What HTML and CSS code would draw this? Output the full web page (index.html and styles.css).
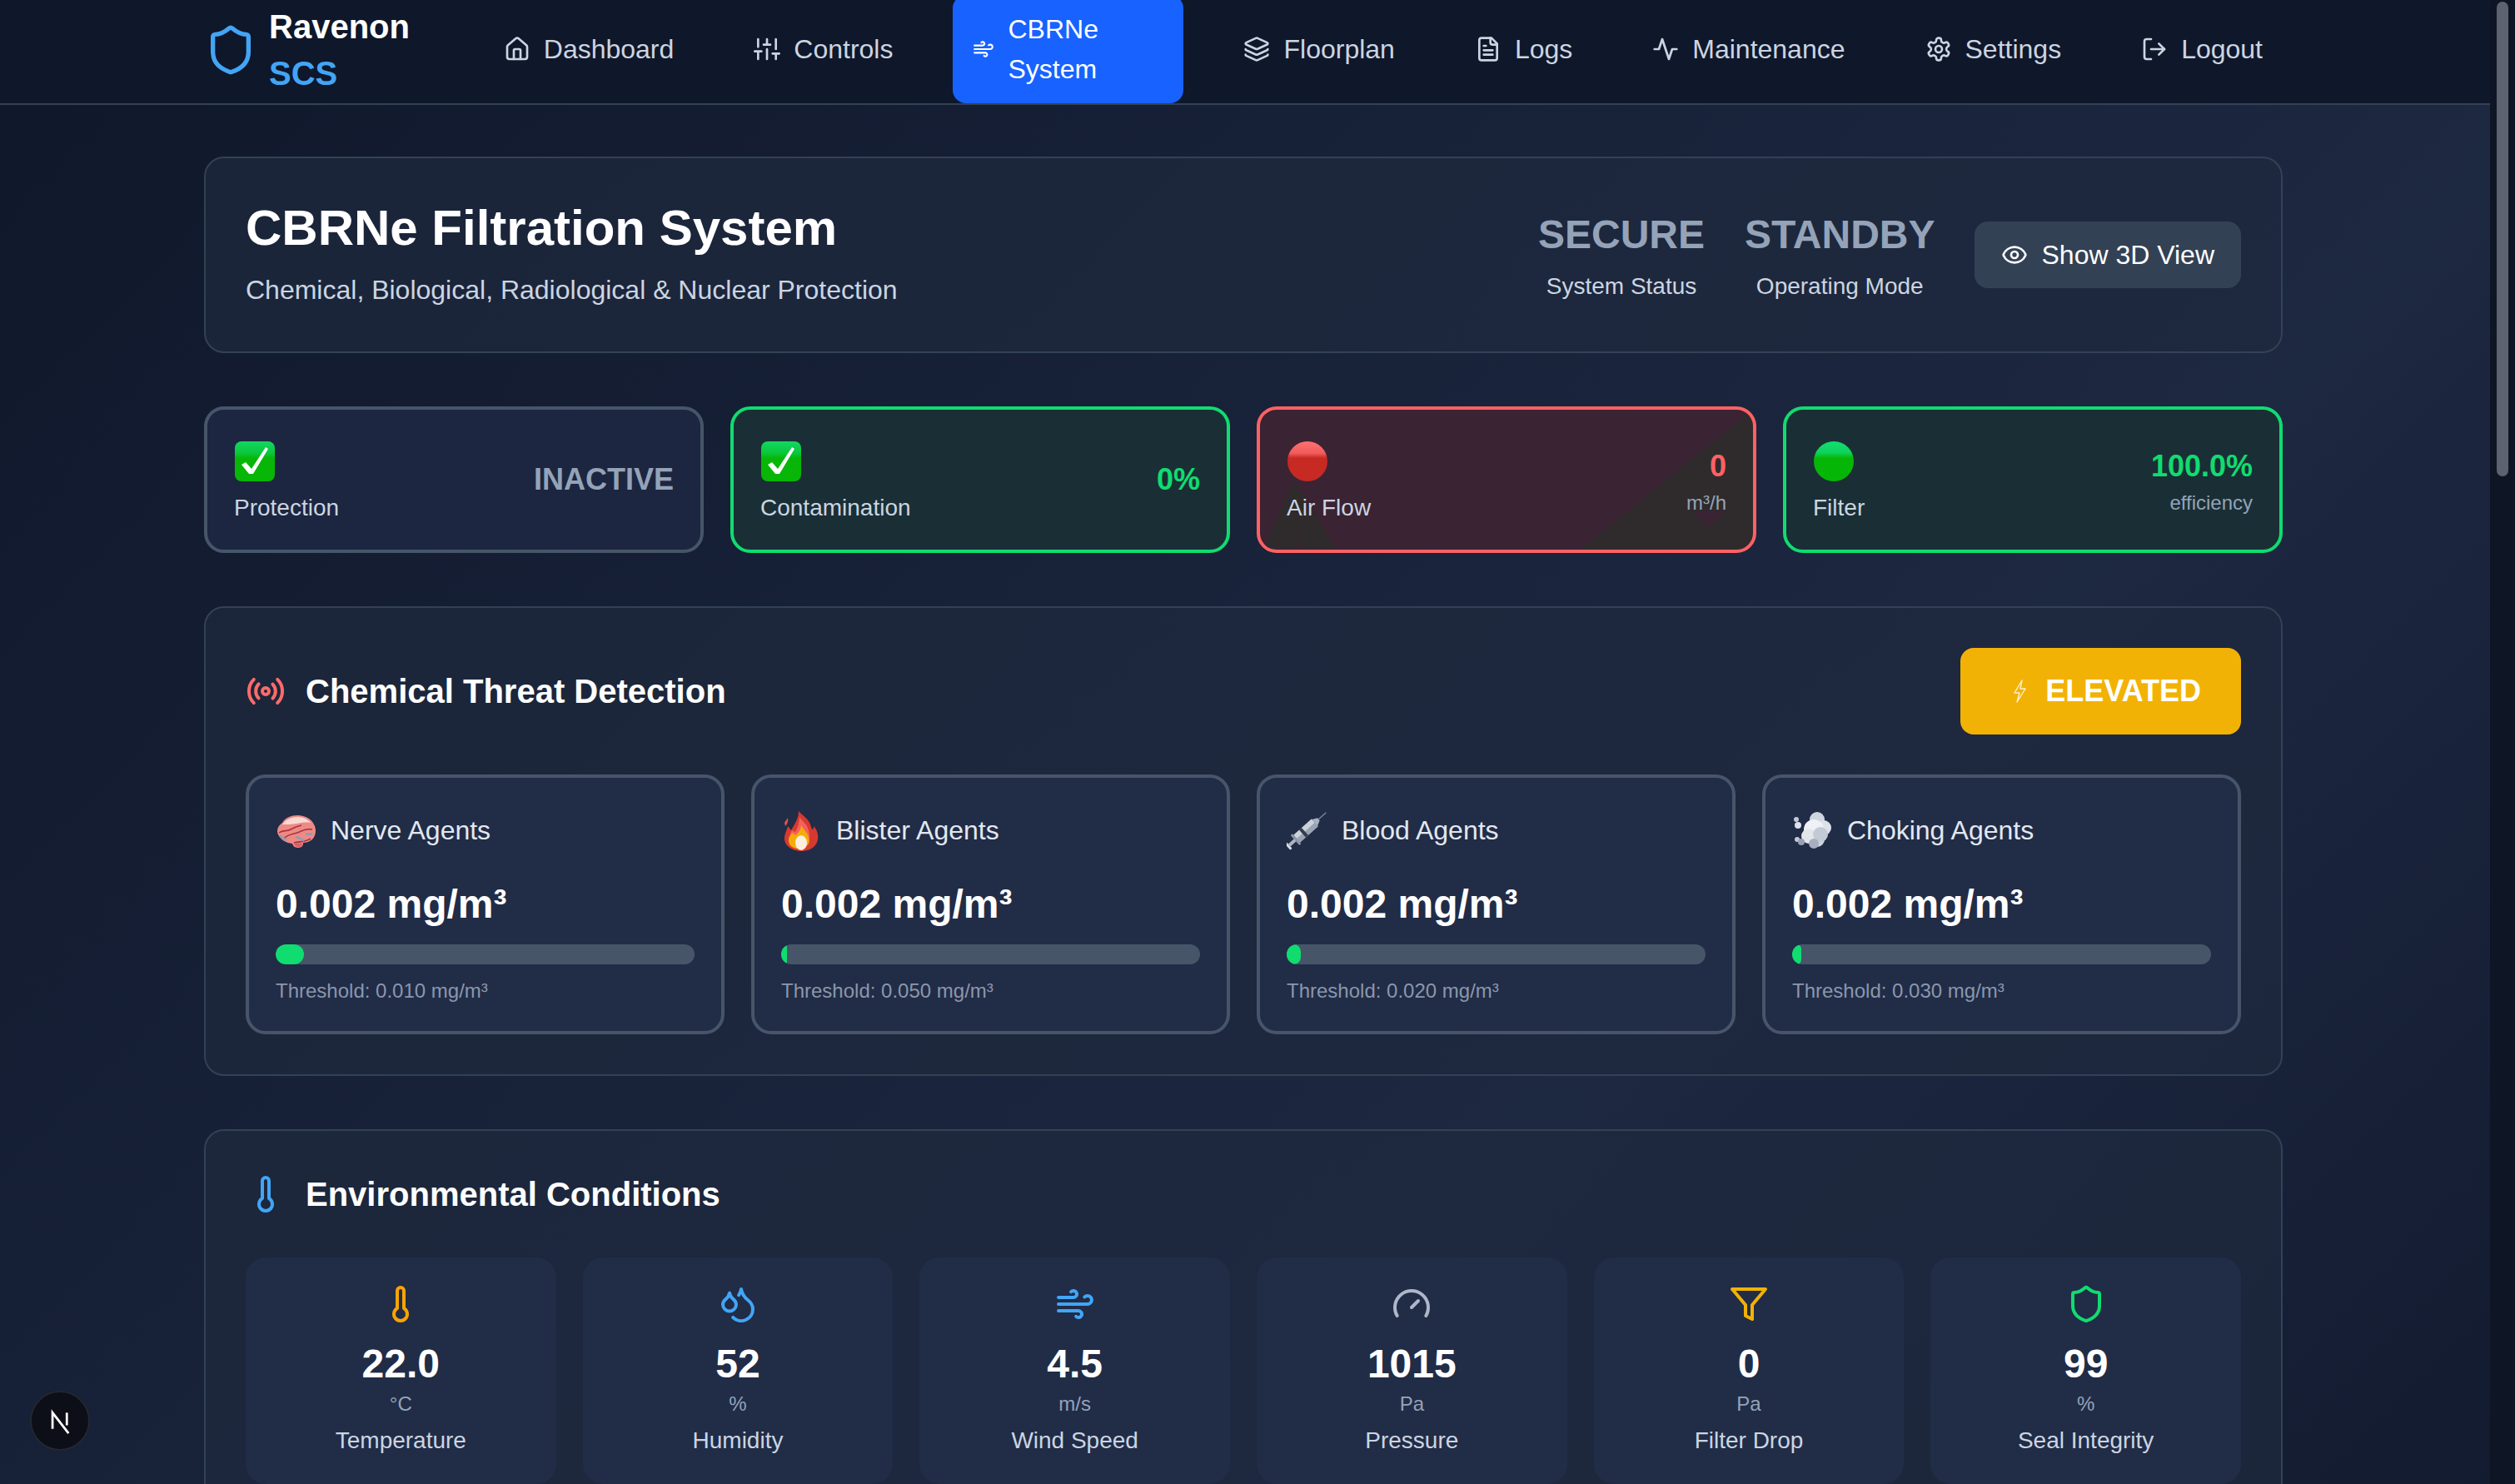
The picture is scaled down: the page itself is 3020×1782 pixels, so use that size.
FILE: index.html
```html
<!DOCTYPE html>
<html lang="en">
<head>
    <meta charset="UTF-8">
    <meta name="viewport" content="width=device-width, initial-scale=1.0">
    <title>Ravenon SCS - CBRNe System</title>
    <link rel="stylesheet" href="styles.css">
</head>
<body>
<div class="app">
    <div class="page">
        <header class="topbar">
            <div class="topbar-inner">
                <div class="brand">
                    <svg class="brand-icon" viewBox="0 0 24 24"><path d="M20 13c0 5-3.5 7.5-7.66 8.95a1 1 0 0 1-.67-.01C7.5 20.5 4 18 4 13V6a1 1 0 0 1 1-1c2 0 4.5-1.2 6.24-2.72a1.17 1.17 0 0 1 1.52 0C14.51 3.81 17 5 19 5a1 1 0 0 1 1 1z"/></svg>
                    <div class="brand-text">Ravenon <span>SCS</span></div>
                </div>
                <nav class="nav">
                    <a class="nav-item"><svg class="icon" viewBox="0 0 24 24"><path d="M15 21v-8a1 1 0 0 0-1-1h-4a1 1 0 0 0-1 1v8"/><path d="M3 10a2 2 0 0 1 .709-1.528l7-5.999a2 2 0 0 1 2.582 0l7 5.999A2 2 0 0 1 21 10v9a2 2 0 0 1-2 2H5a2 2 0 0 1-2-2z"/></svg>Dashboard</a>
                    <a class="nav-item"><svg class="icon" viewBox="0 0 24 24"><path d="M4 21v-7M4 10V3M12 21v-9M12 8V3M20 21v-5M20 12V3M1 14h6M9 8h6M17 16h6"/></svg>Controls</a>
                    <a class="nav-item active"><svg class="icon" viewBox="0 0 24 24"><path d="M17.7 7.7a2.5 2.5 0 1 1 1.8 4.3H2"/><path d="M9.6 4.6A2 2 0 1 1 11 8H2"/><path d="M12.6 19.4A2 2 0 1 0 14 16H2"/></svg><span>CBRNe System</span></a>
                    <a class="nav-item"><svg class="icon" viewBox="0 0 24 24"><path d="M12.83 2.18a2 2 0 0 0-1.66 0L2.6 6.08a1 1 0 0 0 0 1.83l8.58 3.91a2 2 0 0 0 1.66 0l8.58-3.9a1 1 0 0 0 0-1.83Z"/><path d="M2 12a1 1 0 0 0 .58.91l8.6 3.91a2 2 0 0 0 1.65 0l8.58-3.9A1 1 0 0 0 22 12"/><path d="M2 17a1 1 0 0 0 .58.91l8.6 3.91a2 2 0 0 0 1.65 0l8.58-3.9A1 1 0 0 0 22 17"/></svg>Floorplan</a>
                    <a class="nav-item"><svg class="icon" viewBox="0 0 24 24"><path d="M15 2H6a2 2 0 0 0-2 2v16a2 2 0 0 0 2 2h12a2 2 0 0 0 2-2V7Z"/><path d="M14 2v4a2 2 0 0 0 2 2h4"/><path d="M10 9H8M16 13H8M16 17H8"/></svg>Logs</a>
                    <a class="nav-item"><svg class="icon" viewBox="0 0 24 24"><path d="M22 12h-4l-3 9L9 3l-3 9H2"/></svg>Maintenance</a>
                    <a class="nav-item"><svg class="icon" viewBox="0 0 24 24"><path d="M12.22 2h-.44a2 2 0 0 0-2 2v.18a2 2 0 0 1-1 1.73l-.43.25a2 2 0 0 1-2 0l-.15-.08a2 2 0 0 0-2.73.73l-.22.38a2 2 0 0 0 .73 2.73l.15.1a2 2 0 0 1 1 1.72v.51a2 2 0 0 1-1 1.74l-.15.09a2 2 0 0 0-.73 2.73l.22.38a2 2 0 0 0 2.73.73l.15-.08a2 2 0 0 1 2 0l.43.25a2 2 0 0 1 1 1.73V20a2 2 0 0 0 2 2h.44a2 2 0 0 0 2-2v-.18a2 2 0 0 1 1-1.73l.43-.25a2 2 0 0 1 2 0l.15.08a2 2 0 0 0 2.73-.73l.22-.39a2 2 0 0 0-.73-2.73l-.15-.08a2 2 0 0 1-1-1.74v-.5a2 2 0 0 1 1-1.74l.15-.09a2 2 0 0 0 .73-2.73l-.22-.38a2 2 0 0 0-2.73-.73l-.15.08a2 2 0 0 1-2 0l-.43-.25a2 2 0 0 1-1-1.73V4a2 2 0 0 0-2-2z"/><circle cx="12" cy="12" r="3"/></svg>Settings</a>
                    <a class="nav-item"><svg class="icon" viewBox="0 0 24 24"><path d="M9 21H5a2 2 0 0 1-2-2V5a2 2 0 0 1 2-2h4"/><path d="M16 17l5-5-5-5"/><path d="M21 12H9"/></svg>Logout</a>
                </nav>
            </div>
        </header>

        <main class="content">
            <section class="panel hero">
                <div>
                    <h1>CBRNe Filtration System</h1>
                    <p class="hero-sub">Chemical, Biological, Radiological &amp; Nuclear Protection</p>
                </div>
                <div class="hero-right">
                    <div class="hero-stat"><div class="hero-value">SECURE</div><div class="hero-label">System Status</div></div>
                    <div class="hero-stat"><div class="hero-value">STANDBY</div><div class="hero-label">Operating Mode</div></div>
                    <button class="btn-3d"><svg class="icon" viewBox="0 0 24 24"><path d="M2.062 12.348a1 1 0 0 1 0-.696 10.75 10.75 0 0 1 19.876 0 1 1 0 0 1 0 .696 10.75 10.75 0 0 1-19.876 0"/><circle cx="12" cy="12" r="3"/></svg>Show 3D View</button>
                </div>
            </section>

            <section class="status-grid">
                <div class="status-card">
                    <div><svg class="emoji" viewBox="0 0 48 48"><use href="#e-check"/></svg><div class="status-label">Protection</div></div>
                    <div class="status-value muted">INACTIVE</div>
                </div>
                <div class="status-card good">
                    <div><svg class="emoji" viewBox="0 0 48 48"><use href="#e-check"/></svg><div class="status-label">Contamination</div></div>
                    <div class="status-value">0%</div>
                </div>
                <div class="status-card bad">
                    <div><svg class="emoji" viewBox="0 0 48 48"><use href="#e-red"/></svg><div class="status-label">Air Flow</div></div>
                    <div><div class="status-value">0</div><div class="status-unit">m³/h</div></div>
                </div>
                <div class="status-card good">
                    <div><svg class="emoji" viewBox="0 0 48 48"><use href="#e-green"/></svg><div class="status-label">Filter</div></div>
                    <div><div class="status-value">100.0%</div><div class="status-unit">efficiency</div></div>
                </div>
            </section>

            <section class="panel threat">
                <div class="section-head">
                    <h2><svg class="icon-lg red" viewBox="0 0 24 24"><path d="M4.9 19.1C1 15.2 1 8.8 4.9 4.9"/><path d="M7.8 16.2c-2.3-2.3-2.3-6.1 0-8.5"/><circle cx="12" cy="12" r="2"/><path d="M16.2 7.8c2.3 2.3 2.3 6.1 0 8.5"/><path d="M19.1 4.9C23 8.8 23 15.1 19.1 19"/></svg>Chemical Threat Detection</h2>
                    <div class="level-badge"><svg class="bolt" viewBox="0 0 20 28"><path d="M12 1 3 16h6L6 27l10-16h-6z"/></svg>ELEVATED</div>
                </div>
                <div class="agent-grid">
                    <div class="agent-card">
                        <div class="agent-name"><svg class="emoji" viewBox="0 0 48 48"><use href="#e-brain"/></svg>Nerve Agents</div>
                        <div class="agent-value">0.002 mg/m³</div>
                        <div class="bar"><div class="bar-fill" style="width: 6.67%"></div></div>
                        <div class="agent-limit">Threshold: 0.010 mg/m³</div>
                    </div>
                    <div class="agent-card">
                        <div class="agent-name"><svg class="emoji" viewBox="0 0 48 48"><use href="#e-fire"/></svg>Blister Agents</div>
                        <div class="agent-value">0.002 mg/m³</div>
                        <div class="bar"><div class="bar-fill" style="width: 1.33%"></div></div>
                        <div class="agent-limit">Threshold: 0.050 mg/m³</div>
                    </div>
                    <div class="agent-card">
                        <div class="agent-name"><svg class="emoji" viewBox="0 0 48 48"><use href="#e-syringe"/></svg>Blood Agents</div>
                        <div class="agent-value">0.002 mg/m³</div>
                        <div class="bar"><div class="bar-fill" style="width: 3.33%"></div></div>
                        <div class="agent-limit">Threshold: 0.020 mg/m³</div>
                    </div>
                    <div class="agent-card">
                        <div class="agent-name"><svg class="emoji" viewBox="0 0 48 48"><use href="#e-dash"/></svg>Choking Agents</div>
                        <div class="agent-value">0.002 mg/m³</div>
                        <div class="bar"><div class="bar-fill" style="width: 2.22%"></div></div>
                        <div class="agent-limit">Threshold: 0.030 mg/m³</div>
                    </div>
                </div>
            </section>

            <section class="panel env">
                <div class="section-head env-head">
                    <h2><svg class="icon-lg blue" viewBox="0 0 24 24"><path d="M14 4v10.54a4 4 0 1 1-4 0V4a2 2 0 0 1 4 0Z"/></svg>Environmental Conditions</h2>
                </div>
                <div class="env-grid">
                    <div class="env-card">
                        <svg class="icon-lg orange" viewBox="0 0 24 24"><path d="M14 4v10.54a4 4 0 1 1-4 0V4a2 2 0 0 1 4 0Z"/></svg>
                        <div class="env-value">22.0</div><div class="env-unit">°C</div><div class="env-label">Temperature</div>
                    </div>
                    <div class="env-card">
                        <svg class="icon-lg blue" viewBox="0 0 24 24"><path d="M7 16.3c2.2 0 4-1.83 4-4.05 0-1.16-.57-2.26-1.71-3.19S7.29 6.75 7 5.3c-.29 1.45-1.14 2.84-2.29 3.76S3 11.1 3 12.25c0 2.22 1.8 4.05 4 4.05z"/><path d="M12.56 6.6A10.97 10.97 0 0 0 14 3.02c.5 2.5 2 4.9 4 6.5s3 3.5 3 5.5a6.98 6.98 0 0 1-11.91 4.97"/></svg>
                        <div class="env-value">52</div><div class="env-unit">%</div><div class="env-label">Humidity</div>
                    </div>
                    <div class="env-card">
                        <svg class="icon-lg blue" viewBox="0 0 24 24"><path d="M17.7 7.7a2.5 2.5 0 1 1 1.8 4.3H2"/><path d="M9.6 4.6A2 2 0 1 1 11 8H2"/><path d="M12.6 19.4A2 2 0 1 0 14 16H2"/></svg>
                        <div class="env-value">4.5</div><div class="env-unit">m/s</div><div class="env-label">Wind Speed</div>
                    </div>
                    <div class="env-card">
                        <svg class="icon-lg grey" viewBox="0 0 24 24"><path d="m12 14 4-4"/><path d="M3.34 19a10 10 0 1 1 17.32 0"/></svg>
                        <div class="env-value">1015</div><div class="env-unit">Pa</div><div class="env-label">Pressure</div>
                    </div>
                    <div class="env-card">
                        <svg class="icon-lg amber" viewBox="0 0 24 24"><path d="M22 3H2l8 9.46V19l4 2v-8.54z"/></svg>
                        <div class="env-value">0</div><div class="env-unit">Pa</div><div class="env-label">Filter Drop</div>
                    </div>
                    <div class="env-card">
                        <svg class="icon-lg green" viewBox="0 0 24 24"><path d="M20 13c0 5-3.5 7.5-7.66 8.95a1 1 0 0 1-.67-.01C7.5 20.5 4 18 4 13V6a1 1 0 0 1 1-1c2 0 4.5-1.2 6.24-2.72a1.17 1.17 0 0 1 1.52 0C14.51 3.81 17 5 19 5a1 1 0 0 1 1 1z"/></svg>
                        <div class="env-value">99</div><div class="env-unit">%</div><div class="env-label">Seal Integrity</div>
                    </div>
                </div>
            </section>
        </main>
    </div>

    <aside class="scrollbar"><div class="scrollbar-thumb"></div></aside>
</div>

<div class="next-badge">
    <svg viewBox="0 0 32 32"><path class="next-n" d="M9.5 23V9l14 18"/><path class="next-n" d="M22 9v11"/></svg>
</div>

<svg class="sprites" width="0" height="0">
    <defs>
        <linearGradient id="g-check" x1="0" y1="0" x2="0" y2="1"><stop offset="0" stop-color="#13d862"/><stop offset=".3" stop-color="#0ac63a"/><stop offset=".42" stop-color="#07b607"/></linearGradient>
        <linearGradient id="g-red" x1="0" y1="0" x2="0" y2="1"><stop offset="0" stop-color="#ff7272"/><stop offset=".3" stop-color="#f25a5a"/><stop offset=".42" stop-color="#c62a22"/></linearGradient>
        <linearGradient id="g-green" x1="0" y1="0" x2="0" y2="1"><stop offset="0" stop-color="#12de72"/><stop offset=".28" stop-color="#0fd25a"/><stop offset=".42" stop-color="#06b606"/></linearGradient>
        <symbol id="e-check" viewBox="0 0 48 48">
            <rect width="48" height="48" rx="8" fill="url(#g-check)"/>
            <path d="M8 28l5-3 7 8L37 7l3 2-18 30h-5z" fill="#fff"/>
        </symbol>
        <symbol id="e-red" viewBox="0 0 48 48"><circle cx="24" cy="24" r="24" fill="url(#g-red)"/></symbol>
        <symbol id="e-green" viewBox="0 0 48 48"><circle cx="24" cy="24" r="24" fill="url(#g-green)"/></symbol>
        <symbol id="e-brain" viewBox="0 0 48 48">
            <path d="M20 39C12 38 4 34 2 25 2 20 4 17 8 14 11 8 19 5 26 5 36 5 44 10 47 18 49 23 48 30 44 34 40 37 36 38 33 38 33 42 31 44 27 44 23 44 21 42 20 39z" fill="#ee8a85"/>
            <path d="M8 16C12 10 20 7 27 7 33 7 39 10 42 14 36 13 30 14 25 15 19 16 13 16 8 16z" fill="#fbd9d3"/>
            <path d="M4 26C9 22 13 25 18 22S26 18 31 17M10 33C14 28 20 28 26 26S36 20 44 22M22 38C28 36 34 38 42 33" fill="none" stroke="#a8343f" stroke-width="1.6"/>
            <path d="M5 29C8 32 10 33 13 35M24 31C28 32 31 33 34 36M36 27C38 28 41 28 44 27" fill="none" stroke="#8f9bb5" stroke-width="2.4"/>
            <path d="M22 39C25 38 29 38 32 39 32 42 30 43 27 43 24 43 23 41 22 39z" fill="#d9606a"/>
        </symbol>
        <symbol id="e-fire" viewBox="0 0 48 48">
            <path d="M21 0c4 5 13 9 15 19 1 3 1 3 2 3 1-1 1-3 1-4 4 4 6 10 5 16-1 8-9 14-20 14-10 0-20-6-20-15 0-6 3-10 4-15l4 5c4-7 9-14 9-23z" fill="#d8392e"/>
            <path d="M22 7c3 5 9 8 11 16 1 5 2 9 0 12-3 5-14 6-19 2-5-4-4-9-1-14 2 1 3 2 4 2 3-5 5-11 5-18z" fill="#f4615a"/>
            <path d="M24 16c1 5 8 9 9 16 2 5 0 11-9 13-7 1-15-2-15-10 0-5 3-7 5-9 1 2 3 2 3 3 4-3 7-7 7-13z" fill="#f4ac08"/>
            <ellipse cx="24" cy="38" rx="7" ry="9" fill="#fdeee0"/>
            <path d="M4 14c1-2 3-4 4-6 1 4-1 8-3 10z" fill="#e4544e"/>
        </symbol>
        <symbol id="e-syringe" viewBox="0 0 48 48">
            <g transform="translate(1 43) rotate(-41.7)">
                <rect x="0" y="-5" width="3" height="10" rx="1" fill="#d9dde3"/>
                <rect x="3" y="-2" width="10" height="4" fill="#aeb5c1"/>
                <rect x="12" y="-8" width="3" height="16" rx="1" fill="#8e97a8"/>
                <rect x="15" y="-6" width="29" height="12" rx="1" fill="#ccd2da"/>
                <rect x="15" y="0" width="29" height="6" fill="#98a3b5"/>
                <rect x="24" y="-6" width="4" height="12" fill="#343c4c"/>
                <path d="M44-5 50-2V2L44 5z" fill="#aab2c0"/>
                <rect x="50" y="-.7" width="12" height="1.4" fill="#7d8696"/>
            </g>
        </symbol>
        <symbol id="e-dash" viewBox="0 0 48 48">
            <circle cx="30" cy="10" r="9" fill="#cfd5df"/><circle cx="38" cy="20" r="9" fill="#dde1e8"/><circle cx="26" cy="22" r="12" fill="#eef1f5"/>
            <circle cx="30" cy="34" r="9" fill="#cdd3de"/><circle cx="20" cy="30" r="9" fill="#e3e6ec"/><circle cx="34" cy="28" r="9" fill="#c3cad6"/><circle cx="26" cy="39" r="6" fill="#a6aec0"/>
            <circle cx="5" cy="10" r="3" fill="#c2c9d5"/><circle cx="7" cy="17" r="4" fill="#dde1e8"/><circle cx="6" cy="34" r="3" fill="#c2c9d5"/><circle cx="11" cy="37" r="4" fill="#99a2b4"/>
        </symbol>
    </defs>
</svg>
</body>
</html>
```

FILE: styles.css
```css
* { box-sizing: border-box; }
html, body { margin: 0; height: 100%; overflow: hidden; }
body { font-family: "Liberation Sans", Arial, sans-serif; color: #fff; background: #0e1525; }
h1, h2, p { margin: 0; }

.app { display: flex; width: 3020px; height: 1782px; overflow: hidden; }
.page { width: 2990px; flex: none; overflow: hidden; background: linear-gradient(135deg, #0f172a 0%, #1d2841 67%, #131b30 100%); }
.scrollbar { flex: 1; padding: 2px 8px; background: #0e1525; }
.scrollbar-thumb { height: 570px; border-radius: 7px; background: #5c6270; }

.icon { width: 32px; height: 32px; flex: none; fill: none; stroke: currentColor; stroke-width: 2; stroke-linecap: round; stroke-linejoin: round; }
.icon-lg { width: 48px; height: 48px; flex: none; fill: none; stroke: currentColor; stroke-width: 2; stroke-linecap: round; stroke-linejoin: round; }
.red { color: #ff6b6b; }
.blue { color: #42a5f5; }
.orange { color: #f9a406; }
.amber { color: #f2b205; }
.grey { color: #aeb7c7; }
.green { color: #10dc70; }
.emoji { width: 48px; height: 48px; flex: none; display: block; }
.sprites { position: absolute; }

.topbar { padding-bottom: 4px; background: #0f172a; border-bottom: 2px solid #334155; }
.topbar-inner { display: flex; align-items: center; justify-content: space-between; width: 2560px; height: 120px; margin-left: 213px; padding: 0 32px; }
.brand { display: flex; align-items: center; gap: 14px; }
.brand-icon { width: 64px; height: 64px; fill: none; stroke: #42a5f5; stroke-width: 2; stroke-linecap: round; stroke-linejoin: round; }
.brand-text { width: 170px; font-size: 40px; line-height: 56px; font-weight: bold; }
.brand-text span { color: #42a5f5; }
.nav { display: flex; align-items: center; gap: 48px; margin-bottom: 2px; }
.nav-item { display: flex; align-items: center; gap: 16px; padding: 8px 24px; font-size: 32px; line-height: 48px; color: #cbd5e1; border-radius: 16px; }
.nav-item.active { width: 277px; height: 130px; color: #fff; background: #1862ff; }
.nav-item.active .icon { width: 26px; height: 26px; }

.content { width: 2560px; margin-left: 213px; padding: 62px 32px 0; }
.panel { background: rgba(30, 41, 63, 0.72); border: 2px solid #334155; border-radius: 24px; padding: 48px; }

.hero { display: flex; align-items: center; justify-content: space-between; }
.hero h1 { font-size: 60px; line-height: 72px; font-weight: bold; margin-bottom: 14px; }
.hero-sub { font-size: 32px; line-height: 48px; padding-bottom: 2px; color: #cbd5e1; }
.hero-right { display: flex; align-items: center; gap: 48px; }
.hero-stat { padding-top: 2px; text-align: center; }
.hero-value { font-size: 48px; line-height: 64px; font-weight: bold; color: #94a3b8; margin-bottom: 10px; }
.hero-label { font-size: 28px; line-height: 40px; color: #cbd5e1; }
.btn-3d { display: flex; align-items: center; gap: 16px; padding: 16px 32px; border: 0; border-radius: 16px; font: inherit; font-size: 32px; line-height: 48px; color: #fff; background: #334155; }

.status-grid { display: grid; grid-template-columns: repeat(4, 1fr); gap: 32px; margin: 64px 0; }
.status-card { position: relative; overflow: hidden; display: flex; align-items: center; justify-content: space-between; padding: 32px; border: 4px solid #475569; border-radius: 24px; background: #1c2640; }
.status-card > div { position: relative; z-index: 1; text-align: right; }
.status-card > div:first-child { text-align: left; }
.status-card .emoji { margin: 6px 0 12px 1px; }
.status-label { font-size: 28px; line-height: 40px; margin-bottom: -2px; color: #cbd5e1; }
.status-value { font-size: 36px; line-height: 56px; font-weight: bold; }
.status-value.muted { color: #94a3b8; }
.status-unit { font-size: 24px; line-height: 32px; color: #94a3b8; }
.good { border-color: #10dc70; background: #1a2f35; }
.good .status-value { color: #10dc70; }
.bad { border-color: #ff6164; background: linear-gradient(141deg, #3a2333 74%, #2f2b2c 74%); }
.bad .status-value { color: #ff6164; }
.bad::before { content: ""; position: absolute; inset: 0; background: #2f2b2c; clip-path: polygon(41px 85px, 4px 167px, 46px 167px, 46px 151px, 50px 167px, 91px 167px); }
.bad::after { content: ""; position: absolute; inset: 0; background: #3a2333; clip-path: polygon(517px 121px, 559px 121px, 538px 141px); }

.section-head { display: flex; align-items: center; justify-content: space-between; margin-bottom: 48px; }
.section-head h2 { display: flex; align-items: center; gap: 24px; font-size: 40px; line-height: 56px; font-weight: bold; }
.level-badge { display: flex; align-items: center; gap: 12px; padding: 24px 48px 24px 54px; font-size: 36px; line-height: 56px; font-weight: bold; border-radius: 16px; background: #f2b205; }
.bolt { width: 36px; height: 28px; fill: none; stroke: #fff2cf; stroke-width: 1.4; stroke-linejoin: round; }

.agent-grid { display: grid; grid-template-columns: repeat(4, 1fr); gap: 32px; }
.agent-card { padding: 32px; border: 4px solid #475569; border-radius: 24px; background: #212c47; }
.agent-name { display: flex; align-items: center; gap: 18px; height: 64px; margin-bottom: 24px; padding-bottom: 2px; font-size: 32px; line-height: 48px; color: #e2e8f0; }
.agent-name .emoji { margin-top: 2px; }
.agent-value { font-size: 48px; line-height: 64px; font-weight: bold; margin-bottom: 16px; }
.bar { height: 24px; border-radius: 12px; background: #475569; overflow: hidden; margin-bottom: 16px; }
.bar-fill { height: 100%; border-radius: 12px; background: #10dc70; }
.agent-limit { font-size: 24px; line-height: 32px; color: #8a97ab; }

.env { margin-top: 64px; }
.env-grid { display: grid; grid-template-columns: repeat(6, 1fr); gap: 32px; }
.env-card { display: flex; flex-direction: column; align-items: center; padding: 32px; border-radius: 24px; background: #212c47; text-align: center; }
.env-value { margin-top: 16px; font-size: 48px; line-height: 64px; font-weight: bold; }
.env-unit { font-size: 24px; line-height: 32px; color: #94a3b8; margin-bottom: 8px; }
.env-label { font-size: 28px; line-height: 40px; color: #cbd5e1; }

.next-badge { position: fixed; left: 36px; bottom: 40px; width: 72px; height: 72px; display: flex; align-items: center; justify-content: center; border-radius: 50%; background: #0c0f18; border: 2px solid #23272e; }
.next-badge svg { width: 44px; height: 44px; }
.next-n { fill: none; stroke: #fff; stroke-width: 2; }
```
